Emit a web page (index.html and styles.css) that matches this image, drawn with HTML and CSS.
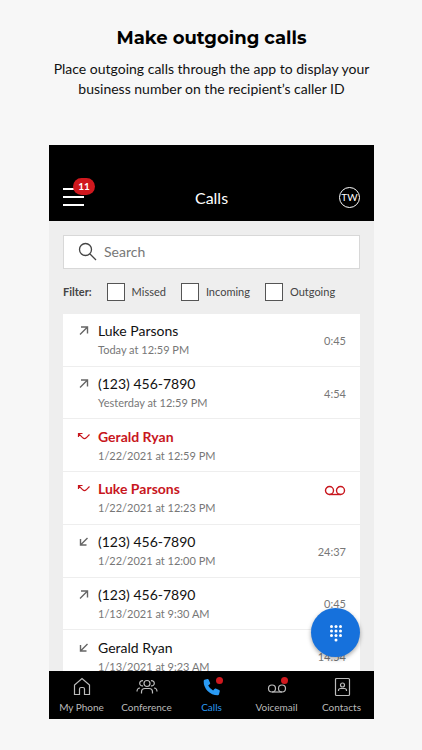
FILE: index.html
```html
<!DOCTYPE html>
<html lang="en">
<head>
<meta charset="utf-8">
<meta name="viewport" content="width=device-width, initial-scale=1">
<title>Make outgoing calls</title>
<link rel="stylesheet" href="styles.css">
</head>
<body>
<svg class="sprite" aria-hidden="true">
  <symbol id="out" viewBox="0 0 14 14"><path d="M3 11.500 10.500 4M4 4h6.500v6.500"/></symbol>
  <symbol id="in" viewBox="0 0 14 14"><path d="M10.500 4 3.500 11M3.500 5v6H9.500"/></symbol>
  <symbol id="missed" viewBox="0 0 14 14"><path d="M1.500 8V4.500H5.500M1.500 4.500l4.300 4.300q1.700 1.500 3.400 0l3.300-3.300"/></symbol>
  <symbol id="voicemail" viewBox="0 0 22 12"><circle cx="5.500" cy="5.500" r="4"/><circle cx="16.500" cy="5.500" r="4"/><path d="M5.500 9.500h11"/></symbol>
</svg>
<header class="intro">
  <h1>Make outgoing calls</h1>
  <p>Place outgoing calls through the app to display your business number on the recipient’s caller ID</p>
</header>
<main class="phone">
  <div class="topbar">
    <button class="menu" aria-label="Menu, 11 notifications"><span class="bars"></span><span class="badge">11</span></button>
    <h2>Calls</h2>
    <button class="avatar">TW</button>
  </div>
  <div class="content">
    <label class="search">
      <svg viewBox="0 0 20 20" aria-hidden="true"><circle cx="7.500" cy="7.500" r="6"/><path d="m12 12 6 6"/></svg>
      <input type="search" placeholder="Search" aria-label="Search">
    </label>
    <div class="filters">
      <strong>Filter:</strong>
      <label><input type="checkbox">Missed</label>
      <label><input type="checkbox">Incoming</label>
      <label><input type="checkbox">Outgoing</label>
    </div>
    <ul class="calls">
      <li><svg class="dir"><use href="#out"/></svg><div><h3>Luke Parsons</h3><p>Today at 12:59 PM</p></div><span class="time">0:45</span></li>
      <li><svg class="dir"><use href="#out"/></svg><div><h3>(123) 456-7890</h3><p>Yesterday at 12:59 PM</p></div><span class="time">4:54</span></li>
      <li class="missed"><svg class="dir"><use href="#missed"/></svg><div><h3>Gerald Ryan</h3><p>1/22/2021 at 12:59 PM</p></div></li>
      <li class="missed"><svg class="dir"><use href="#missed"/></svg><div><h3>Luke Parsons</h3><p>1/22/2021 at 12:23 PM</p></div><svg class="vm"><use href="#voicemail"/></svg></li>
      <li><svg class="dir"><use href="#in"/></svg><div><h3>(123) 456-7890</h3><p>1/22/2021 at 12:00 PM</p></div><span class="time">24:37</span></li>
      <li><svg class="dir"><use href="#out"/></svg><div><h3>(123) 456-7890</h3><p>1/13/2021 at 9:30 AM</p></div><span class="time">0:45</span></li>
      <li><svg class="dir"><use href="#in"/></svg><div><h3>Gerald Ryan</h3><p>1/13/2021 at 9:23 AM</p></div><span class="time">14:54</span></li>
    </ul>
    <button class="dial" aria-label="Open dial pad">
      <svg viewBox="0 0 14 18" aria-hidden="true"><circle cx="2.500" cy="2.500" r="1.500"/><circle cx="7" cy="2.500" r="1.500"/><circle cx="11.500" cy="2.500" r="1.500"/><circle cx="2.500" cy="7" r="1.500"/><circle cx="7" cy="7" r="1.500"/><circle cx="11.500" cy="7" r="1.500"/><circle cx="2.500" cy="11.500" r="1.500"/><circle cx="7" cy="11.500" r="1.500"/><circle cx="11.500" cy="11.500" r="1.500"/><circle cx="7" cy="16" r="1.500"/></svg>
    </button>
  </div>
  <nav class="tabs">
    <a href="#phone"><svg viewBox="0 0 22 20"><path d="M3.500 17.500V8L11 1.500 18.500 8v9.500h-5v-5.500q0-1.500-1.500-1.500h-2q-1.500 0-1.500 1.500v5.500z"/></svg>My Phone</a>
    <a href="#conference"><svg viewBox="0 0 22 20"><circle cx="11" cy="6.500" r="3"/><path d="M5.500 16.500v-1.500q0-3.500 3.500-3.500h4q3.500 0 3.500 3.500v1.500M7 3.800A2.600 2.600 0 1 0 7 8.800M15 3.800A2.600 2.600 0 1 1 15 8.800M1 14.500q0-3.300 3-3.500M21 14.500q0-3.300-3-3.500"/></svg>Conference</a>
    <a href="#calls" class="active"><svg viewBox="0 0 22 20"><path class="handset" d="M3.500 2.800 6.300 2q1-.2 1.400.7l1.400 3.200q.3.800-.4 1.400L7.200 8.600q1.600 3.300 4.900 4.900l1.300-1.600q.6-.6 1.400-.3l3.300 1.400q.9.400.7 1.300l-.8 3q-.2.900-1.200.9Q10.700 18 6.600 13.900T2.700 4q0-1 .8-1.200Z"/><circle class="dot" cx="18.500" cy="3.500" r="3.500"/></svg>Calls</a>
    <a href="#voicemail-box"><svg viewBox="0 0 22 20"><circle cx="6" cy="11.500" r="3.500"/><circle cx="16" cy="11.500" r="3.500"/><path d="M6 15h10"/><circle class="dot" cx="18.500" cy="3.500" r="3.500"/></svg>Voicemail</a>
    <a href="#contacts"><svg viewBox="0 0 22 20"><rect x="4.500" y="1.500" width="14" height="17" rx="1"/><circle cx="11.500" cy="8" r="2"/><path d="M7.500 14v-.5q0-2 2-2h4q2 0 2 2v.5"/></svg>Contacts</a>
  </nav>
</main>
</body>
</html>
```
FILE: styles.css
```css
* { box-sizing: border-box; }
body {
  display: flex;
  flex-direction: column;
  height: 100vh;
  margin: 0;
  padding: 24px 48px 31px 49px;
  background: #f7f7f7;
  color: #111;
  font-family: Lato, "Liberation Sans", sans-serif;
}
h1, h2, h3, p, ul { margin: 0; padding: 0; }
button { border: 0; padding: 0; font-family: inherit; }
svg { fill: none; stroke: currentColor; flex: none; }
.sprite { position: absolute; width: 0; height: 0; }
.intro { height: 121px; text-align: center; }
.intro h1 {
  font: 700 18px/28px Montserrat, Inter, sans-serif;
  color: #000;
}
.intro p { margin-top: 7px; font-size: 14px; line-height: 20px; }
.phone {
  display: flex;
  flex: 1;
  flex-direction: column;
  min-height: 0;
  background: #eee;
}
.topbar {
  display: grid;
  grid-template-columns: 1fr auto 1fr;
  align-items: center;
  height: 76px;
  padding: 28px 14px 0;
  background: #000;
  color: #fff;
}
.topbar h2 { padding-top: 2px; font-size: 16px; font-weight: 400; line-height: 20px; }
.menu {
  position: relative;
  width: 21px;
  height: 18px;
  background: none;
}
.bars {
  display: block;
  height: 18px;
  border: solid #fff;
  border-width: 2px 0;
  background: linear-gradient(#fff, #fff) center / 100% 2px no-repeat;
}
.badge {
  position: absolute;
  top: -10px;
  left: 10px;
  width: 22px;
  border-radius: 9px;
  background: #d0181e;
  color: #fff;
  font-size: 10px;
  font-weight: 700;
  line-height: 17px;
}
.avatar {
  justify-self: end;
  width: 21px;
  height: 21px;
  border: 1px solid #fff;
  border-radius: 50%;
  background: none;
  color: #fff;
  font-size: 10px;
  line-height: 18px;
}
.content {
  position: relative;
  flex: 1;
  min-height: 0;
  padding: 14px 14px 0;
  overflow: hidden;
}
.search {
  display: flex;
  align-items: center;
  gap: 6px;
  height: 34px;
  padding-left: 14px;
  border: 1px solid #d8d8d8;
  background: #fff;
  color: #444;
}
.search svg { width: 20px; height: 20px; stroke-width: 1.3; }
.search input {
  flex: 1;
  min-width: 0;
  padding: 0;
  border: 0;
  outline: 0;
  background: none;
  font: 14px/20px Lato, sans-serif;
}
.search input::placeholder { color: #777; }
.filters {
  display: flex;
  align-items: center;
  gap: 15px;
  height: 45px;
  color: #444;
  font-size: 11px;
}
.filters label { display: flex; align-items: center; gap: 7px; }
.filters input {
  appearance: none;
  width: 18px;
  height: 18px;
  margin: 0;
  border: 1px solid #555;
  background: #fff;
}
.filters input:checked { background: #1671dc; }
.calls {
  display: grid;
  grid-auto-rows: 1fr;
  min-height: 369px;
  background: #fff;
  list-style: none;
}
.calls li {
  display: flex;
  align-items: center;
  padding: 1px 14px 0;
  border-bottom: 1px solid #eee;
}
.dir { width: 14px; height: 14px; margin-bottom: 20px; color: #666; stroke-width: 1.4; }
.calls div { flex: 1; padding-left: 7px; }
.calls h3 { color: #111; font-size: 14px; font-weight: 400; line-height: 20px; }
.calls p { color: #777; font-size: 11px; line-height: 18px; }
.calls .missed h3 { color: #c8161d; font-weight: 700; }
.missed .dir, .vm { color: #c8161d; }
.missed .dir { stroke-width: 1.2; }
.vm { width: 22px; height: 12px; margin-bottom: 14px; stroke-width: 1.4; }
.time { color: #777; font-size: 11px; }
.dial {
  position: absolute;
  right: 14px;
  bottom: 14px;
  display: grid;
  place-items: center;
  width: 49px;
  height: 49px;
  border-radius: 50%;
  background: #1671dc;
  box-shadow: 0 2px 4px rgb(0 0 0 / 35%);
}
.dial svg { width: 14px; height: 18px; fill: #fff; stroke: none; }
.tabs {
  display: grid;
  grid-template-columns: repeat(5, 1fr);
  height: 48px;
  background: #000;
}
.tabs a {
  display: flex;
  flex-direction: column;
  align-items: center;
  gap: 2px;
  padding-top: 6px;
  color: #bbb;
  font-size: 10px;
  line-height: 16px;
  text-decoration: none;
}
.tabs svg { width: 22px; height: 20px; stroke-width: 1.2; }
.tabs .active { color: #2a9af3; }
.handset { fill: currentColor; stroke: none; }
.dot { fill: #d0181e; stroke: none; }
```
